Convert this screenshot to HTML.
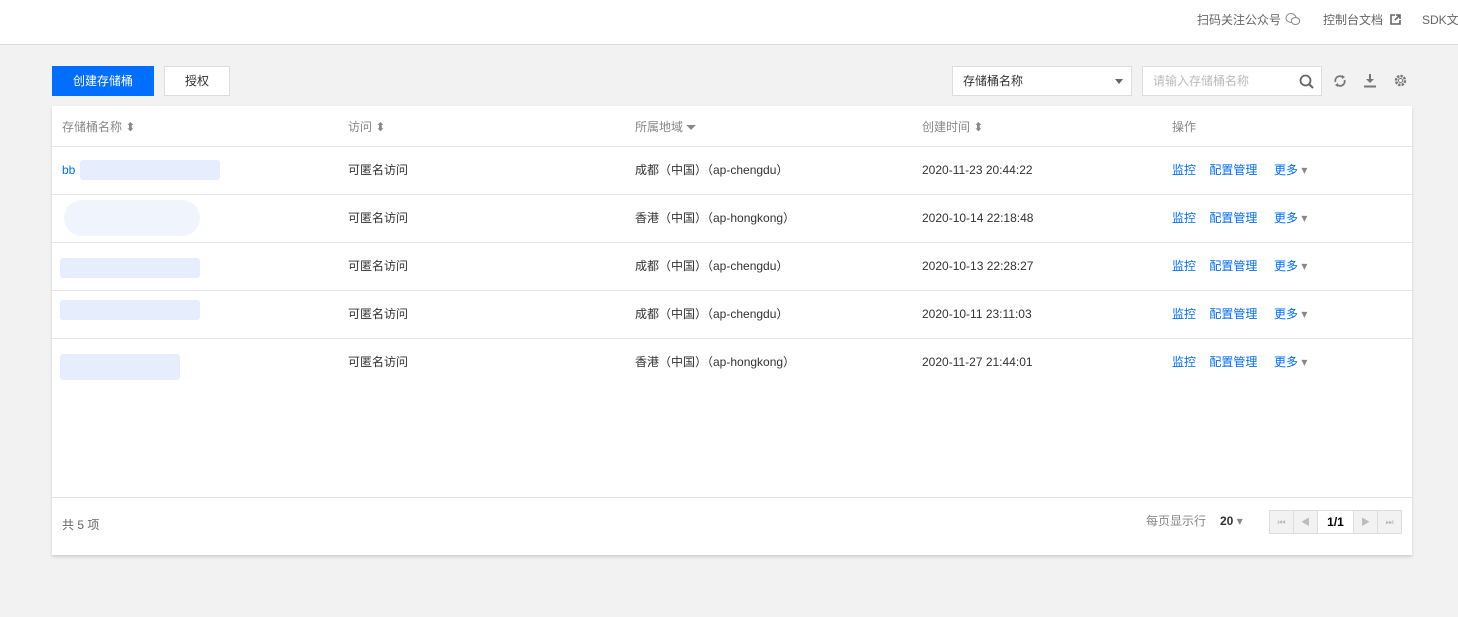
<!DOCTYPE html>
<html><head><meta charset="utf-8"><style>
*{margin:0;padding:0;box-sizing:border-box}
body{width:1458px;height:617px;background:#f2f2f2;font-family:"Liberation Sans","Noto Sans CJK SC",sans-serif;font-size:12px;color:#333;position:relative;overflow:hidden}
.top{position:absolute;left:0;top:0;width:1458px;height:45px;background:#fff;border-bottom:1px solid #ddd}
.a{position:absolute;white-space:nowrap;line-height:16px}
.btn{position:absolute;top:66px;height:30px;line-height:30px;text-align:center}
.card{position:absolute;left:52px;top:106px;width:1360px;height:449px;background:#fff;box-shadow:0 2px 3px rgba(0,0,0,.15)}
.line{position:absolute;left:0;width:1360px;height:1px;background:#e5e5e5}
.blue{color:#006eff}
.gr{color:#888}
.blur{position:absolute;background:#e6edfc;border-radius:3px}
</style></head><body>
<div class="top">
<span class="a" style="left:1197px;top:12px;color:#666">扫码关注公众号</span>
<svg class="a" style="left:1285px;top:12px" width="16" height="14" viewBox="0 0 16 14"><ellipse cx="6" cy="6" rx="5" ry="4.5" fill="none" stroke="#888"/><ellipse cx="10.5" cy="9" rx="4.2" ry="3.5" fill="#fff" stroke="#888"/></svg>
<span class="a" style="left:1323px;top:12px;color:#666">控制台文档</span>
<svg class="a" style="left:1390px;top:14px" width="11" height="11" viewBox="0 0 11 11"><path d="M5 1H1v9h9V6" fill="none" stroke="#666" stroke-width="1.6"/><path d="M6 1h4v4M10 1L5 6" fill="none" stroke="#666" stroke-width="1.6"/></svg>
<span class="a" style="left:1422px;top:12px;color:#666">SDK文</span>
</div>
<div class="btn" style="left:52px;width:102px;background:#006eff;color:#fff">创建存储桶</div>
<div class="btn" style="left:164px;width:66px;background:#fff;border:1px solid #ddd;line-height:28px">授权</div>
<div class="btn" style="left:952px;width:180px;background:#fff;border:1px solid #ddd;text-align:left;padding-left:10px;line-height:28px">存储桶名称<span style="position:absolute;right:8px;top:12px;border:4px solid transparent;border-top:5px solid #666"></span></div>
<div class="btn" style="left:1142px;width:180px;background:#fff;border:1px solid #ddd;text-align:left;padding-left:10px;line-height:28px;color:#bbb">请输入存储桶名称
<svg style="position:absolute;right:7px;top:7px" width="15" height="15" viewBox="0 0 15 15"><circle cx="6.5" cy="6.5" r="5" fill="none" stroke="#666" stroke-width="1.8"/><path d="M10 10l4 4" stroke="#666" stroke-width="2"/></svg></div>
<svg class="a" style="left:1333px;top:74px" width="14" height="14" viewBox="0 0 14 14"><path d="M2.5 8A4.5 4.5 0 0 1 10 3.5M11.5 6A4.5 4.5 0 0 1 4 10.5" fill="none" stroke="#777" stroke-width="1.8"/><path d="M9 1l3 2-3 2zM5 9l-3 2 3 2z" fill="#777"/></svg>
<svg class="a" style="left:1363px;top:73px" width="14" height="15" viewBox="0 0 14 15"><path d="M7 1v8" stroke="#777" stroke-width="2"/><path d="M3 6l4 4 4-4z" fill="#777"/><path d="M1 13.5h12" stroke="#777" stroke-width="2"/></svg>
<svg class="a" style="left:1393px;top:73px" width="15" height="15" viewBox="0 0 15 15"><circle cx="7.5" cy="7.5" r="4.5" fill="none" stroke="#777" stroke-width="2.5" stroke-dasharray="2.4 1.1"/><circle cx="7.5" cy="7.5" r="2" fill="#fff" stroke="#777"/></svg>
<div class="card">
<span class="a gr" style="left:10px;top:13px">存储桶名称 ⬍</span>
<span class="a gr" style="left:296px;top:13px">访问 ⬍</span>
<span class="a gr" style="left:583px;top:13px">所属地域 <b style="color:#888">⏷</b></span>
<span class="a gr" style="left:870px;top:13px">创建时间 ⬍</span>
<span class="a gr" style="left:1120px;top:13px">操作</span>
<div class="line" style="top:40px"></div>
<div class="line" style="top:88px"></div>
<div class="line" style="top:136px"></div>
<div class="line" style="top:184px"></div>
<div class="line" style="top:232px"></div>
<div class="line" style="top:391px"></div>
<span class="a blue" style="left:10px;top:56px">bb</span>
<div class="blur" style="left:28px;top:54px;width:140px;height:20px"></div>
<div class="blur" style="left:12px;top:94px;width:136px;height:36px;opacity:.6;border-radius:18px"></div>
<div class="blur" style="left:8px;top:152px;width:140px;height:20px"></div>
<div class="blur" style="left:8px;top:194px;width:140px;height:20px"></div>
<div class="blur" style="left:8px;top:248px;width:120px;height:26px"></div>
<span class="a" style="left:296px;top:56px">可匿名访问</span>
<span class="a" style="left:296px;top:104px">可匿名访问</span>
<span class="a" style="left:296px;top:152px">可匿名访问</span>
<span class="a" style="left:296px;top:200px">可匿名访问</span>
<span class="a" style="left:296px;top:248px">可匿名访问</span>
<span class="a" style="left:583px;top:56px">成都（中国）（ap-chengdu）</span>
<span class="a" style="left:583px;top:104px">香港（中国）（ap-hongkong）</span>
<span class="a" style="left:583px;top:152px">成都（中国）（ap-chengdu）</span>
<span class="a" style="left:583px;top:200px">成都（中国）（ap-chengdu）</span>
<span class="a" style="left:583px;top:248px">香港（中国）（ap-hongkong）</span>
<span class="a" style="left:870px;top:56px">2020-11-23 20:44:22</span>
<span class="a" style="left:870px;top:104px">2020-10-14 22:18:48</span>
<span class="a" style="left:870px;top:152px">2020-10-13 22:28:27</span>
<span class="a" style="left:870px;top:200px">2020-10-11 23:11:03</span>
<span class="a" style="left:870px;top:248px">2020-11-27 21:44:01</span>
<span class="a blue" style="left:1120px;top:56px">监控 &nbsp; &nbsp;配置管理 &nbsp; &nbsp; 更多 <span style="color:#888">▾</span></span>
<span class="a blue" style="left:1120px;top:104px">监控 &nbsp; &nbsp;配置管理 &nbsp; &nbsp; 更多 <span style="color:#888">▾</span></span>
<span class="a blue" style="left:1120px;top:152px">监控 &nbsp; &nbsp;配置管理 &nbsp; &nbsp; 更多 <span style="color:#888">▾</span></span>
<span class="a blue" style="left:1120px;top:200px">监控 &nbsp; &nbsp;配置管理 &nbsp; &nbsp; 更多 <span style="color:#888">▾</span></span>
<span class="a blue" style="left:1120px;top:248px">监控 &nbsp; &nbsp;配置管理 &nbsp; &nbsp; 更多 <span style="color:#888">▾</span></span>
<span class="a" style="left:10px;top:411px;color:#666">共 5 项</span>
<span class="a" style="left:1094px;top:407px;color:#888">每页显示行</span>
<span class="a" style="left:1168px;top:407px;font-weight:bold">20 <span style="color:#888;font-weight:normal">▾</span></span>
<div class="a" style="left:1217px;top:404px;width:133px;height:24px;border:1px solid #ddd;background:#f2f2f2;display:flex">
<div style="width:24px;border-right:1px solid #ddd;color:#bbb;text-align:center;line-height:22px;font-size:9px">⏮</div>
<div style="width:24px;border-right:1px solid #ddd;color:#bbb;text-align:center;line-height:22px;font-size:9px">◀</div>
<div style="width:36px;border-right:1px solid #ddd;background:#fff;text-align:center;line-height:22px;font-weight:bold;color:#000">1/1</div>
<div style="width:24px;border-right:1px solid #ddd;color:#bbb;text-align:center;line-height:22px;font-size:9px">▶</div>
<div style="width:23px;color:#bbb;text-align:center;line-height:22px;font-size:9px">⏭</div>
</div>
</div>
</body></html>
